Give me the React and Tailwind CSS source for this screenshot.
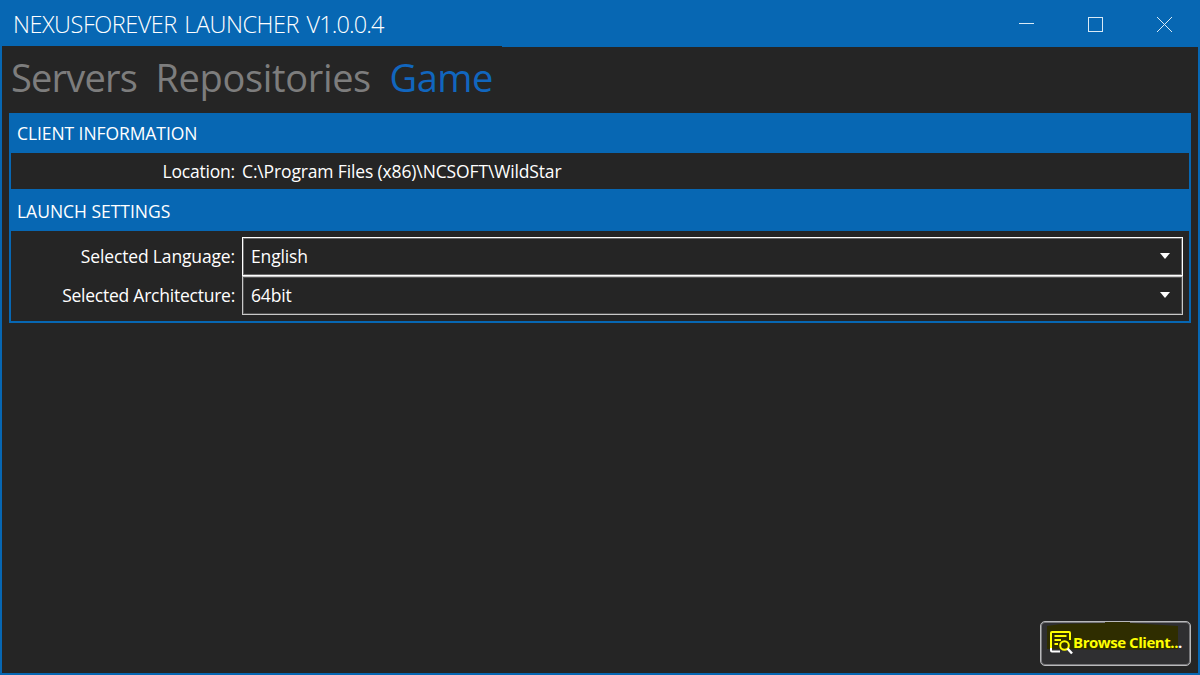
function TitleBar() {
  return (
    <header className="flex h-[46px] items-center justify-between bg-[#0767b3] pl-[13px] pr-[28px]">
      <h1 className="pt-[2px] text-[23.5px] font-[350] leading-[46px] tracking-[-0.48px] text-white [word-spacing:2px]">
        NEXUSFOREVER LAUNCHER <span className="tracking-[-0.9px]">V1.0.0.4</span>
      </h1>
      <svg width="153" height="15" viewBox="0 0 153 15" fill="none" stroke="#d9eaf6" shapeRendering="crispEdges" className="mt-[3px]">
        <path d="M0 6.5H15" />
        <rect x="69.5" y="0.5" width="14" height="14" />
        <path d="M138 0L153 15M153 0L138 15" shapeRendering="auto" />
      </svg>
    </header>
  );
}

function Tabs() {
  return (
    <nav className="flex h-[66px] items-start pl-[9px] text-[38px] leading-[52px] text-[#7d7d7d]">
      <span className="w-[144.5px] pt-[4px] tracking-[-0.8px]">Servers</span>
      <span className="w-[234px] pt-[4px] tracking-[-0.35px]">Repositories</span>
      <span className="pt-[4px] tracking-[-0.5px] text-[#1166be]">Game</span>
    </nav>
  );
}

function Select({ label, value, labelClass, frameClass }) {
  return (
    <div className="flex h-[39px] items-center">
      <span className={`w-[224px] pb-[2px] text-right ${labelClass}`}>{label}</span>
      <div className={`ml-[7px] flex h-[39px] flex-1 items-center justify-between border pl-[8px] pr-[12px] ${frameClass}`}>
        <span className="pb-[2px] tracking-[-0.15px]">{value}</span>
        <svg width="10" height="6" viewBox="0 0 10 6" className="mb-[2px]">
          <path d="M0 0H10L5 6Z" fill="#fff" />
        </svg>
      </div>
    </div>
  );
}

function BrowseButton() {
  return (
    <button className="flex h-[45px] w-[151px] items-stretch rounded-[5px] border border-[#b9b9bb] bg-[#2f2f31] shadow-[inset_0_0_0_1px_#77777a]">
      <span className="relative ml-[6px] h-[29px] w-[131px]">
        <svg width="131" height="29" viewBox="0 0 131 29" className="absolute left-0 top-0">
          <path d="M0 4L14 2L58 1V0H83V1L131 4V27L100 28L0 27Z" fill="#2f2d00" />
        </svg>
        <span className="relative flex pl-[3px] pt-[7px]">
          <svg width="24" height="26" viewBox="0 0 24 26" fill="none" stroke="#ffff00" strokeWidth="2" className="mt-[1px] shrink-0">
            <path d="M20 10V3Q20 2 19 2H2Q1 2 1 3V18" />
            <path d="M4.5 6H16.5M4.5 10H11M4.5 14H8" />
            <path d="M1 18V20.5Q1 21.5 2 21.5H10" stroke="#fff" />
            <circle cx="14.5" cy="15.5" r="4.3" />
            <path d="M17.5 18.5L22 23.5" stroke="#fff" strokeWidth="2.5" />
          </svg>
          <span className="-ml-px whitespace-nowrap pt-px text-[15px] font-bold leading-[24px] tracking-[-0.45px] text-[#ffff00]">
            Browse Client..<span className="text-white">.</span>
          </span>
        </span>
      </span>
    </button>
  );
}

export default function App() {
  return (
    <div className="flex h-[675px] w-[1200px] flex-col overflow-hidden bg-[#0767b3] pb-[2px] font-['Open_Sans','Noto_Sans',sans-serif]">
      <TitleBar />
      <div className="mx-[2px] flex flex-1 flex-col bg-[#252525]">
        <div className="flex h-px justify-end">
          <div className="w-[696px] bg-[#0767b3]" />
        </div>
        <Tabs />
        <main className="mx-[7px] flex h-[210px] flex-col border-2 border-t-0 border-[#0767b3] text-[17.5px] leading-[24px] text-white">
          <h2 className="h-[40px] bg-[#0767b3] pl-[6px] leading-[40px] tracking-[-0.08px]">CLIENT INFORMATION</h2>
          <div className="flex h-[36px] items-center">
            <span className="w-[224px] text-right tracking-[-0.2px]">Location:</span>
            <span className="ml-[7px] tracking-[-0.14px]">C:\Program Files (x86)\NCSOFT\WildStar</span>
          </div>
          <h2 className="h-[42px] bg-[#0767b3] pl-[6px] leading-[44px] tracking-[-0.02px]">LAUNCH SETTINGS</h2>
          <div className="pr-[6px] pt-[6px]">
            <Select label="Selected Language:" value="English" labelClass="tracking-[-0.15px]" frameClass="border-white shadow-[inset_0_0_0_1px_#6a6a6a]" />
            <Select label="Selected Architecture:" value="64bit" labelClass="tracking-[-0.24px]" frameClass="border-[#c8c8c8] shadow-[inset_0_0_0_1px_#505050]" />
          </div>
        </main>
        <footer className="mt-auto flex justify-end pb-[7px] pr-[7px]">
          <BrowseButton />
        </footer>
      </div>
    </div>
  );
}
